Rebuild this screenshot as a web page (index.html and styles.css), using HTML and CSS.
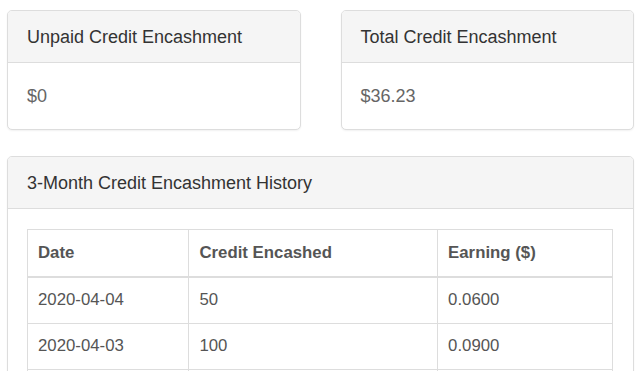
FILE: index.html
```html
<!DOCTYPE html>
<html lang="en">
<head>
    <meta charset="UTF-8">
    <meta name="viewport" content="width=device-width, initial-scale=1.0">
    <title>Credit Encashment</title>
    <link rel="stylesheet" href="styles.css">
</head>
<body>
    <div class="page">
        <div class="row">
            <div class="panel">
                <div class="panel-heading">Unpaid Credit Encashment</div>
                <div class="panel-body">$0</div>
            </div>
            <div class="panel">
                <div class="panel-heading">Total Credit Encashment</div>
                <div class="panel-body">$36.23</div>
            </div>
        </div>

        <div class="panel">
            <div class="panel-heading">3-Month Credit Encashment History</div>
            <div class="panel-body history-body">
                <table class="history-table">
                    <colgroup>
                        <col class="col-date">
                        <col class="col-credit">
                        <col class="col-earning">
                    </colgroup>
                    <thead>
                        <tr>
                            <th>Date</th>
                            <th>Credit Encashed</th>
                            <th>Earning ($)</th>
                        </tr>
                    </thead>
                    <tbody>
                        <tr>
                            <td>2020-04-04</td>
                            <td>50</td>
                            <td>0.0600</td>
                        </tr>
                        <tr>
                            <td>2020-04-03</td>
                            <td>100</td>
                            <td>0.0900</td>
                        </tr>
                        <tr class="row-empty">
                            <td></td>
                            <td></td>
                            <td></td>
                        </tr>
                    </tbody>
                </table>
            </div>
        </div>
    </div>
</body>
</html>
```

FILE: styles.css
```css
body {
    margin: 0;
    background: #fff;
    font-family: "Liberation Sans", Arial, sans-serif;
    color: #555;
}

.page {
    padding: 10px 6px 0 7px;
}

.row {
    display: flex;
    gap: 40px;
    margin-bottom: 26px;
}

.row .panel {
    flex: 1;
}

.panel {
    background: #fff;
    border: 1px solid #ddd;
    border-radius: 5px;
    box-shadow: 0 1px 2px rgba(0, 0, 0, 0.06);
}

.panel-heading {
    background: #f5f5f5;
    border-bottom: 1px solid #ddd;
    border-radius: 4px 4px 0 0;
    padding: 14px 19px 12px;
    font-size: 18px;
    line-height: 25px;
    color: #333;
}

.panel-body {
    padding: 21px 19px;
    font-size: 18px;
    line-height: 24px;
    color: #666;
}

.history-body {
    padding: 20px 20px 20px 19px;
}

.history-table {
    width: 100%;
    border-collapse: collapse;
    font-size: 16.8px;
    color: #555;
}

.col-date { width: 27.6%; }
.col-credit { width: 42.5%; }
.col-earning { width: 29.9%; }

.history-table th,
.history-table td {
    border: 1px solid #ddd;
    text-align: left;
    padding: 10px 10px 11px;
    line-height: 24px;
}

.history-table th {
    font-weight: bold;
    border-bottom-width: 2px;
    padding: 11px 10px 11px;
}

.row-empty td {
    height: 24px;
}
```
